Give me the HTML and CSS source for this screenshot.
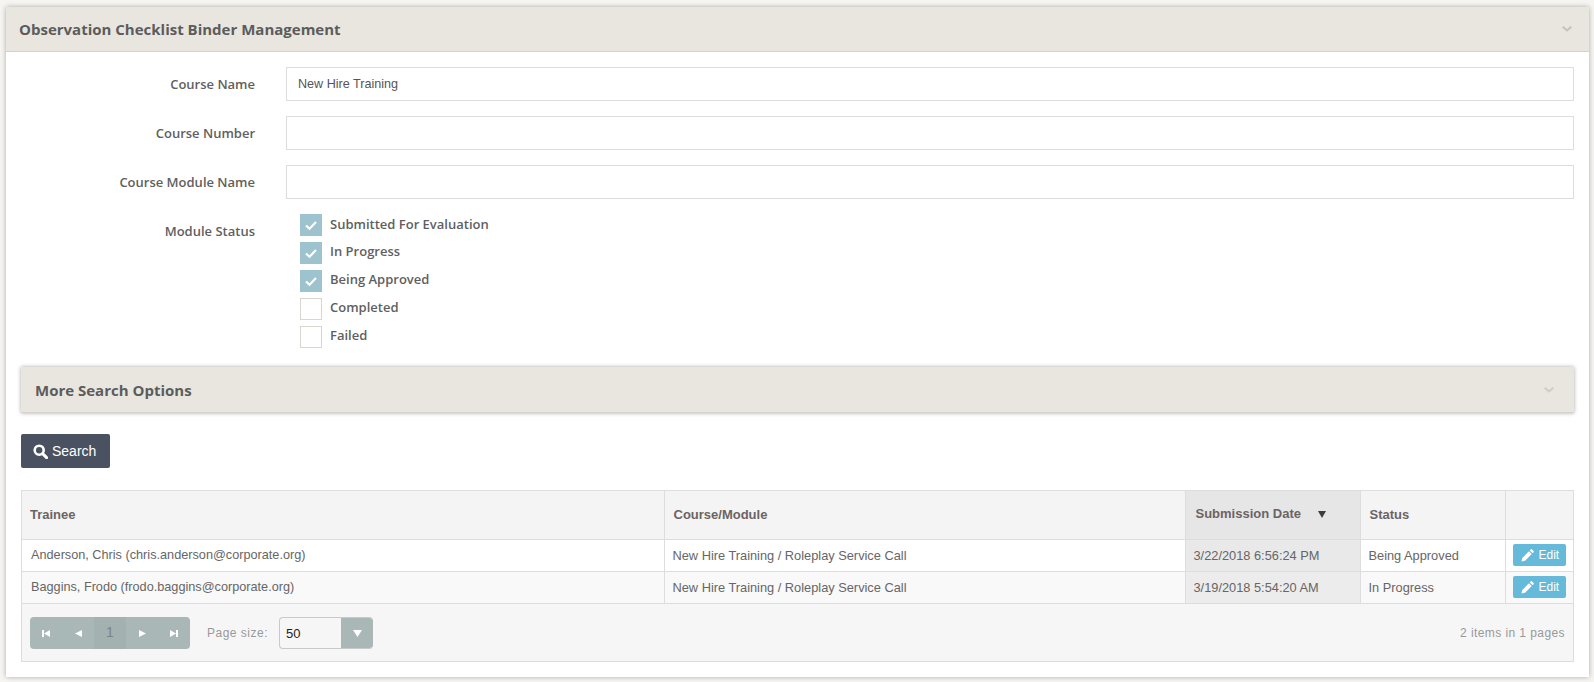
FILE: index.html
```html
<!DOCTYPE html>
<html lang="en">
<head>
    <meta charset="UTF-8">
    <title>Observation Checklist Binder Management</title>
    <link rel="stylesheet" href="styles.css">
</head>
<body>
    <div class="panel">
        <div class="panel-header">
            <h2>Observation Checklist Binder Management</h2>
            <svg class="chevron" width="10" height="6" viewBox="0 0 10 6"><path d="M.7.7L5 4.5 9.3.7" fill="none" stroke="#c4c2bd" stroke-width="2"/></svg>
        </div>
        <div class="panel-body">
            <div class="form-row">
                <label class="form-label">Course Name</label>
                <input class="form-input" type="text" value="New Hire Training">
            </div>
            <div class="form-row">
                <label class="form-label">Course Number</label>
                <input class="form-input" type="text">
            </div>
            <div class="form-row">
                <label class="form-label">Course Module Name</label>
                <input class="form-input" type="text">
            </div>
            <div class="form-row status-row">
                <label class="form-label">Module Status</label>
                <div class="check-list">
                    <div class="check-item"><span class="check-box checked"><svg width="14" height="11" viewBox="0 0 14 11"><path d="M2 5.5l3.5 3.2L12 2" fill="none" stroke="#fff" stroke-width="2.2"/></svg></span><span class="check-text">Submitted For Evaluation</span></div>
                    <div class="check-item"><span class="check-box checked"><svg width="14" height="11" viewBox="0 0 14 11"><path d="M2 5.5l3.5 3.2L12 2" fill="none" stroke="#fff" stroke-width="2.2"/></svg></span><span class="check-text">In Progress</span></div>
                    <div class="check-item"><span class="check-box checked"><svg width="14" height="11" viewBox="0 0 14 11"><path d="M2 5.5l3.5 3.2L12 2" fill="none" stroke="#fff" stroke-width="2.2"/></svg></span><span class="check-text">Being Approved</span></div>
                    <div class="check-item"><span class="check-box"></span><span class="check-text">Completed</span></div>
                    <div class="check-item"><span class="check-box"></span><span class="check-text">Failed</span></div>
                </div>
            </div>

            <div class="sub-panel">
                <h3>More Search Options</h3>
                <svg class="chevron" width="10" height="6" viewBox="0 0 10 6"><path d="M.7.7L5 4.5 9.3.7" fill="none" stroke="#cfcdc9" stroke-width="2"/></svg>
            </div>

            <button class="search-btn" type="button">
                <svg width="15" height="15" viewBox="0 0 15 15"><circle cx="6.2" cy="6.2" r="4.5" fill="none" stroke="#fff" stroke-width="2.6"/><path d="M9.6 9.6l4 4" stroke="#fff" stroke-width="3" stroke-linecap="round"/></svg>
                Search
            </button>

            <div class="grid">
                <table>
                    <colgroup>
                        <col class="col-trainee">
                        <col class="col-course">
                        <col class="col-date">
                        <col class="col-status">
                        <col>
                    </colgroup>
                    <thead>
                        <tr>
                            <th>Trainee</th>
                            <th>Course/Module</th>
                            <th class="sorted"><span class="sort-title">Submission Date</span><svg width="8" height="7" viewBox="0 0 8 7"><path d="M0 0h8L4 7z" fill="#3d3d3d"/></svg></th>
                            <th>Status</th>
                            <th></th>
                        </tr>
                    </thead>
                    <tbody>
                        <tr>
                            <td>Anderson, Chris (chris.anderson@corporate.org)</td>
                            <td>New Hire Training / Roleplay Service Call</td>
                            <td class="sorted">3/22/2018 6:56:24 PM</td>
                            <td>Being Approved</td>
                            <td class="action"><button class="edit-btn" type="button"><svg width="13" height="13" viewBox="0 0 13 13"><path d="M0.5 12.5l.8-3.6 6.6-6.6 2.8 2.8-6.6 6.6zM8.8 1.4l1-1a1 1 0 0 1 1.3 0l1.5 1.5a1 1 0 0 1 0 1.3l-1 1z" fill="#fff"/></svg>Edit</button></td>
                        </tr>
                        <tr class="alt">
                            <td>Baggins, Frodo (frodo.baggins@corporate.org)</td>
                            <td>New Hire Training / Roleplay Service Call</td>
                            <td class="sorted">3/19/2018 5:54:20 AM</td>
                            <td>In Progress</td>
                            <td class="action"><button class="edit-btn" type="button"><svg width="13" height="13" viewBox="0 0 13 13"><path d="M0.5 12.5l.8-3.6 6.6-6.6 2.8 2.8-6.6 6.6zM8.8 1.4l1-1a1 1 0 0 1 1.3 0l1.5 1.5a1 1 0 0 1 0 1.3l-1 1z" fill="#fff"/></svg>Edit</button></td>
                        </tr>
                    </tbody>
                </table>
                <div class="pager">
                    <div class="pager-nums">
                        <span class="pager-btn"><svg width="8" height="7" viewBox="0 0 8 7"><path d="M0 0h2v7H0zM8 0v7L2 3.5z" fill="#fff"/></svg></span>
                        <span class="pager-btn"><svg width="7" height="7" viewBox="0 0 7 7"><path d="M7 0v7L0 3.5z" fill="#fff"/></svg></span>
                        <span class="pager-btn current">1</span>
                        <span class="pager-btn"><svg width="7" height="7" viewBox="0 0 7 7"><path d="M0 0v7l7-3.5z" fill="#fff"/></svg></span>
                        <span class="pager-btn"><svg width="8" height="7" viewBox="0 0 8 7"><path d="M8 0H6v7h2zM0 0v7l6-3.5z" fill="#fff"/></svg></span>
                    </div>
                    <span class="page-size-label">Page size:</span>
                    <div class="page-size">
                        <span class="page-size-value">50</span>
                        <span class="page-size-arrow"><svg width="9" height="7" viewBox="0 0 9 7"><path d="M0 0h9L4.5 7z" fill="#fff"/></svg></span>
                    </div>
                    <span class="pager-info">2 items in 1 pages</span>
                </div>
            </div>
        </div>
    </div>
</body>
</html>
```

FILE: styles.css
```css
html, body {
    height: 100%;
}

body {
    margin: 0;
    padding: 7px 5px 5px 6px;
    box-sizing: border-box;
    background-color: #f6f5f1;
    font-family: "Liberation Sans", Arial, sans-serif;
    color: #666;
    overflow: hidden;
}

.panel {
    background-color: white;
    box-shadow: 0 0 5px rgba(0, 0, 0, 0.3);
    height: 670px;
}

.panel-header {
    display: flex;
    align-items: center;
    justify-content: space-between;
    height: 44px;
    padding: 0 17px 0 13px;
    background-color: #e9e6df;
    border-bottom: 1px solid #d4d2cd;
}

.panel-header h2 {
    margin: 0;
    font-family: "Open Sans", sans-serif;
    font-size: 15px;
    font-weight: 700;
    color: #5c5c5c;
}

.panel-body {
    padding: 15px 15px 0;
}

.form-row {
    display: flex;
    align-items: center;
    margin-bottom: 15px;
}

.form-label {
    width: 234px;
    margin-right: 31px;
    text-align: right;
    font-family: "Open Sans", sans-serif;
    font-size: 13px;
    font-weight: 600;
    color: #5f5f5f;
}

.form-input {
    flex: 1;
    height: 34px;
    padding: 0 11px;
    box-sizing: border-box;
    border: 1px solid #ddd;
    outline: none;
    font-family: "Liberation Sans", Arial, sans-serif;
    font-size: 12.6px;
    color: #555;
}

.status-row {
    align-items: flex-start;
    margin-bottom: 19px;
}

.status-row .form-label {
    padding-top: 8px;
}

.check-list {
    margin-left: 14px;
}

.check-item {
    display: flex;
    align-items: center;
    height: 22px;
    margin-bottom: 6px;
}

.check-item:last-child {
    margin-bottom: 0;
}

.check-box {
    display: flex;
    align-items: center;
    justify-content: center;
    width: 22px;
    height: 22px;
    box-sizing: border-box;
    border: 1px solid #d9d5cf;
    background-color: white;
    margin-right: 8px;
}

.check-box.checked {
    border-color: #9dc3ce;
    background-color: #9dc3ce;
}

.check-text {
    font-family: "Open Sans", sans-serif;
    font-size: 13px;
    font-weight: 600;
    color: #5f5f5f;
    margin-top: -5px;
}

.check-item:first-child .check-text {
    margin-top: -3px;
}

.sub-panel {
    display: flex;
    align-items: center;
    justify-content: space-between;
    height: 46px;
    padding: 0 20px 0 14px;
    box-sizing: border-box;
    background-color: #e9e6df;
    border-bottom: 1px solid #d6d3ce;
    box-shadow: 0 0 4px rgba(0, 0, 0, 0.35);
}

.sub-panel h3 {
    margin: 0;
    font-family: "Open Sans", sans-serif;
    font-size: 15px;
    font-weight: 700;
    color: #5c5c5c;
}

.search-btn {
    display: flex;
    align-items: center;
    gap: 4px;
    width: 89px;
    height: 34px;
    margin: 21px 0 22px;
    padding: 0 12px;
    border: none;
    border-radius: 2px;
    background-color: #4a5261;
    color: white;
    font-family: "Liberation Sans", Arial, sans-serif;
    font-size: 14px;
}

.grid {
    border: 1px solid #ddd;
    background-color: #f6f6f6;
}

table {
    width: 100%;
    table-layout: fixed;
    border-collapse: collapse;
    font-size: 12.8px;
}

.col-trainee { width: 642px; }
.col-course { width: 521px; }
.col-date { width: 175px; }
.col-status { width: 145px; }

th {
    height: 48px;
    padding: 0 10px 0 9px;
    box-sizing: border-box;
    background-color: #f4f4f4;
    border-left: 1px solid #ddd;
    border-bottom: 1px solid #ddd;
    text-align: left;
    font-size: 13px;
    font-weight: 700;
    color: #6b6464;
}

th:first-child {
    padding-left: 8px;
}

th:first-child, td:first-child {
    border-left: none;
}

td {
    height: 32px;
    padding: 0 8px;
    box-sizing: border-box;
    background-color: white;
    border-left: 1px solid #ddd;
    border-bottom: 1px solid #ddd;
    color: #666;
}

td:first-child {
    padding-left: 9px;
    font-size: 12.7px;
}

tr.alt td {
    background-color: #f9f9f9;
}

th.sorted {
    background-color: #e6e6e6;
    padding-left: 10px;
}

th.sorted span, th.sorted svg {
    position: relative;
    top: -1px;
}

td.sorted {
    background-color: #e9e9e9;
}

tr.alt td.sorted {
    background-color: #ececec;
}

.sort-title {
    margin-right: 17px;
}

td.action {
    padding: 0 0 0 7px;
}

.edit-btn {
    display: flex;
    align-items: center;
    gap: 5px;
    width: 53px;
    height: 22px;
    padding: 0 0 0 8px;
    border: none;
    border-radius: 2px;
    background-color: #64bad8;
    color: white;
    font-family: "Liberation Sans", Arial, sans-serif;
    font-size: 12px;
}

.pager {
    display: flex;
    align-items: center;
    height: 55px;
    padding: 2px 8px 0;
}

.pager-nums {
    display: flex;
    height: 32px;
    border-radius: 4px;
    overflow: hidden;
    background-color: #a9b7b6;
}

.pager-btn {
    display: flex;
    align-items: center;
    justify-content: center;
    width: 32px;
    font-size: 14px;
}

.pager-btn.current {
    background-color: #a3b1b1;
    color: #7a8484;
    padding-bottom: 2px;
    box-sizing: border-box;
}

.page-size-label {
    margin-left: 17px;
    font-size: 12px;
    letter-spacing: 0.5px;
    color: #999;
}

.page-size {
    display: flex;
    height: 32px;
    margin-left: 11px;
    border-radius: 4px;
    overflow: hidden;
    box-sizing: border-box;
    border: 1px solid #c9c9c9;
    border-right: none;
}

.page-size-value {
    width: 55px;
    padding-left: 6px;
    box-sizing: content-box;
    line-height: 31px;
    font-size: 13px;
    color: #222;
}

.page-size-arrow {
    display: flex;
    align-items: center;
    justify-content: center;
    width: 32px;
    margin: -1px 0;
    background-color: #a9b7b6;
}

.pager-info {
    margin-left: auto;
    margin-right: 0;
    font-size: 12px;
    letter-spacing: 0.42px;
    color: #999;
}
```
